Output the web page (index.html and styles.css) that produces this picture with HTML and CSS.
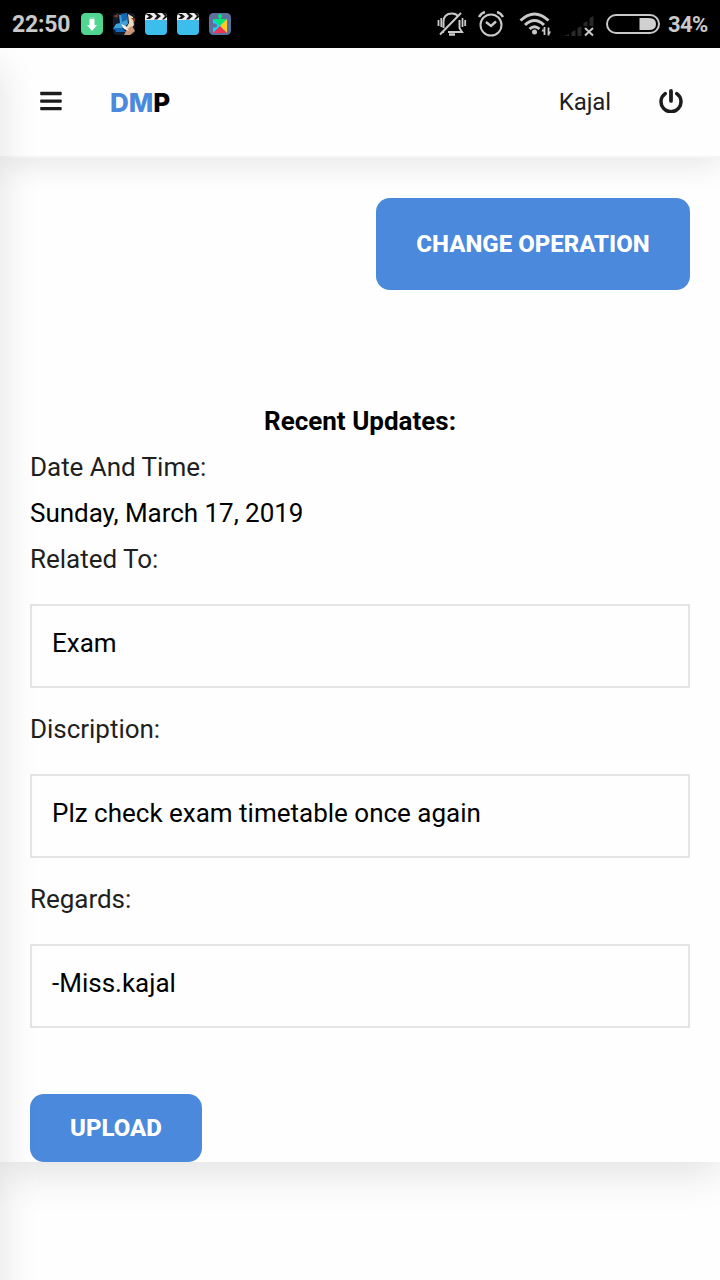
FILE: index.html
```html
<!DOCTYPE html>
<html lang="en">
<head>
<meta charset="utf-8">
<title>DMP</title>
<link rel="stylesheet" href="styles.css">
</head>
<body>
<div class="status">
  <span class="status-text clock">22:50</span>
  <div class="apps">
    <svg viewBox="0 0 22 22"><rect width="22" height="22" rx="4.500" fill="#50d690"/><path d="M8.500 4.500h5v1h-5z" fill="#a5eac6"/><path d="M8.500 6h5v6H16l-5 6-5-6h2.500z" fill="#fff"/></svg>
    <svg viewBox="0 0 22 22"><defs><clipPath id="photo"><rect width="22" height="22" rx="4"/></clipPath></defs><g clip-path="url(#photo)"><path fill="#111b2b" d="M0 0h22v22H0z"/><path fill="#3fa3d9" d="M6 2l8 0 1 9-8 6-7-1 3-5 4-1z"/><path fill="#1467b5" d="M8 1l6-1 1 6-6 3zM1 15l8 0 4 4H3z"/><path fill="#ead8b8" d="M15 1l5 3 1 8-5 6-3-3 3-5z"/><path fill="#ca9675" d="M14 16l5-3 3 5-5 4h-6z"/><path fill="#f2eee8" d="M8 11l5 2 3 5-5-2z"/><path fill="#843421" d="M0 3l6-2-2 4zM18 5l4 0v4z"/></g></svg>
    <svg viewBox="0 0 22 22"><rect y="1" width="22" height="21" rx="4" fill="#3dbdec"/><path d="M0 7V4q0-4 4-4h14q4 0 4 4v3z" fill="#eee"/><path d="M1 1h4l3 2.500-3 2.500H1l3-2.500zM9 0h3l4 3-4 3.500H9l3-3.500zM17 0h3l2 3v1l-3 2.500h-2l3-3.500z" fill="#171717"/></svg>
    <svg viewBox="0 0 22 22"><rect y="1" width="22" height="21" rx="4" fill="#3dbdec"/><path d="M0 7V4q0-4 4-4h14q4 0 4 4v3z" fill="#eee"/><path d="M1 1h4l3 2.500-3 2.500H1l3-2.500zM9 0h3l4 3-4 3.500H9l3-3.500zM17 0h3l2 3v1l-3 2.500h-2l3-3.500z" fill="#171717"/></svg>
    <svg viewBox="0 0 22 22"><rect width="22" height="22" rx="4.500" fill="#5d719f"/><path d="M4 6h14v14H4z" fill="#1dcdf2"/><path d="M4 6h14l-7 7z" fill="#00e676"/><path d="M18 6v14l-7-7z" fill="#ffca28"/><path d="M4 20h14l-7-7z" fill="#f43455"/><path d="M3.500 10.500H6a2 2 0 0 1 0 4H3.500z" fill="#5d719f"/><circle cx="11" cy="3" r="2" fill="#00e676"/><path d="M10 4h2v3h-2z" fill="#00e676"/></svg>
  </div>
  <div class="signals">
    <svg class="bell" width="30" height="26" viewBox="0 0 30 26" fill="none" stroke="#c9c9c9" stroke-width="2"><path d="M6.500 17V11q0-8.500 8.500-8.500 4 0 6.500 3M22.500 9v8l2.500 4H11M7 21H5"/><path d="M3 23.500L24 2"/><path d="M1.500 9v6M4.300 7v9M25.500 7v9M28.200 9v6" stroke-width="1.800"/><path d="M12 23.500h6" stroke-width="2.500"/></svg>
    <svg class="alarm" width="26" height="26" viewBox="0 0 26 26" fill="none" stroke="#c9c9c9" stroke-width="2"><circle cx="13" cy="14" r="10.500"/><path d="M8 11l5 4 5-4.500" stroke-width="2.400"/><path d="M1 6q2-4 6-5M19 1q4 1 6 5" stroke-width="2.500"/></svg>
    <svg class="wifi" width="33" height="26" viewBox="0 0 33 26" fill="none" stroke="#c9c9c9" stroke-width="3"><path d="M1.500 9.500q14-13 28 0M6 14q9.500-9 19 0M10.500 18q5-4.500 10 0"/><circle cx="15.500" cy="21" r="2.500" fill="#c9c9c9" stroke="none"/><path d="M25.500 16v8M29.500 16.500v8" stroke-width="1.800"/><path d="M22.500 20.500h3l-1.500-3zM32 20.500h-3l1.500 3z" fill="#c9c9c9" stroke="none"/></svg>
    <svg class="cell" width="30" height="22" viewBox="0 0 30 22"><path d="M0 21l5-2v2zM7.500 17l4-2v6h-4zM13.500 13l4-2v10h-4zM19.500 8l4-2v5h-4zM25.500 3l4-2v10h-4z" fill="#292929"/><path d="M21 13l8 7.500M29 13l-8 7.500" stroke="#c9c9c9" stroke-width="2"/></svg>
    <svg class="battery" width="54" height="20" viewBox="0 0 54 20"><rect x="1" y="1" width="52" height="18" rx="9" fill="none" stroke="#c9c9c9" stroke-width="2"/><path d="M33.500 4H43q7 0 7 6t-7 6h-9.500z" fill="#d0d0d0"/></svg>
    <span class="status-text">34%</span>
  </div>
</div>
<div class="screen">
  <header class="header">
    <svg class="menu" width="22" height="20" viewBox="0 0 22 20" fill="#1c1c1c"><rect width="21.500" height="3.400" y=".8" x=".2" rx=".8"/><rect width="21.500" height="3.400" y="8.400" x=".2" rx=".8"/><rect width="21.500" height="3.400" y="15.900" x=".2" rx=".8"/></svg>
    <div class="logo"><span class="logo-accent">DM</span>P</div>
    <span class="user">Kajal</span>
    <svg class="power" width="24" height="24" viewBox="0 0 24 24" fill="none" stroke="#1c1c1c" stroke-linecap="round"><path d="M6.200 4.600a10 10 0 1 0 11.600 0" stroke-width="3.500"/><path d="M12 1.900v10" stroke-width="3.800"/></svg>
  </header>
  <main class="content">
    <button class="button change">CHANGE OPERATION</button>
    <h1 class="title">Recent Updates:</h1>
    <div class="label">Date And Time:</div>
    <div class="date">Sunday, March 17, 2019</div>
    <div class="label">Related To:</div>
    <div class="field">Exam</div>
    <div class="label">Discription:</div>
    <div class="field">Plz check exam timetable once again</div>
    <div class="label">Regards:</div>
    <div class="field">-Miss.kajal</div>
    <button class="button upload">UPLOAD</button>
  </main>
  <aside class="drawer"></aside>
</div>
</body>
</html>
```
FILE: styles.css
```css
* { box-sizing: border-box; }
body { margin: 0; background: #fefefe; color: #000; font: 26px/46px Roboto, sans-serif; }
svg { display: block; flex: none; }
.status { height: 48px; background: #000; display: flex; align-items: center; padding: 0 12px; position: relative; z-index: 5; }
.status-text { color: #c9c9c9; font-size: 22px; font-weight: 700; line-height: 48px; padding-top: 2px; letter-spacing: -.6px; }
.clock { width: 69px; font-size: 23px; letter-spacing: -.2px; }
.apps { display: flex; gap: 10px; }
.apps svg { width: 22px; height: 22px; }
.signals { display: flex; align-items: center; margin-left: auto; }
.alarm { margin-left: 11px; }
.wifi { margin-left: 15px; }
.cell { margin-left: 12px; margin-top: 3px; }
.battery { margin: 0 8px 0 12px; }
.signals .status-text { width: 40px; white-space: nowrap; }
.screen { position: relative; height: 1232px; overflow: hidden; }
.header { position: relative; z-index: 2; height: 110px; background: #fefefe; border-bottom: 2px solid #f6f6f6; display: flex; align-items: center; padding: 0 36px 0 40px; box-shadow: 0 6px 30px rgba(0,0,0,.1); }
.menu { margin-bottom: 2px; }
.logo { margin-left: 48px; padding-top: 2px; font-family: Inter, sans-serif; font-weight: 800; font-size: 26px; letter-spacing: 0; }
.logo-accent { color: #4a89dc; }
.user { margin-left: auto; font-size: 24px; letter-spacing: -.1px; color: #1f1f1f; }
.power { margin: 0 1px 2px 48px; }
.content { display: flex; flex-direction: column; height: 1004px; padding: 40px 30px 0; background: #fefefe; box-shadow: 0 10px 40px rgba(0,0,0,.12); }
.button { border: 0; padding: 0; border-radius: 14px; background: #4a89dc; color: #fff; font: 800 24px/46px Roboto, sans-serif; }
.change { align-self: flex-end; width: 314px; height: 92px; }
.upload { width: 172px; height: 68px; margin-top: 48px; }
.title { margin: 108px 0 0; font-size: 26px; line-height: 46px; font-weight: 700; text-align: center; }
.label { color: #1f1f1f; letter-spacing: -.03px; }
.date { letter-spacing: -.04px; }
.field { height: 84px; margin: 22px 0 18px; padding: 14px 20px 20px; border: 2px solid #e4e4e4; }
.drawer { position: absolute; z-index: 3; top: 0; left: -400px; width: 400px; height: 1300px; box-shadow: 0 20px 36px rgba(0,0,0,.12); }
```
